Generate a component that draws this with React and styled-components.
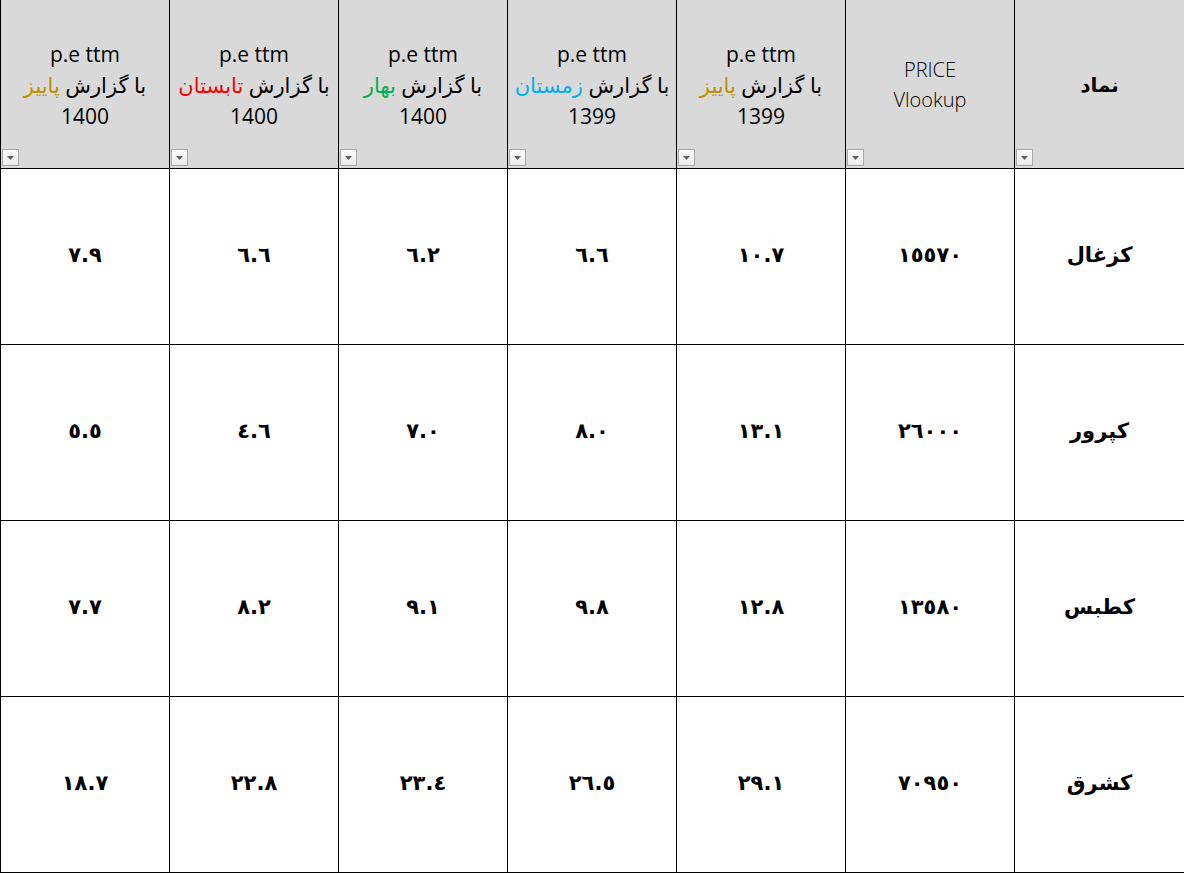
import React from 'react';
import styled, { createGlobalStyle } from 'styled-components';

const GlobalStyle = createGlobalStyle`
  body {
    margin: 0;
    background: #ffffff;
  }
`;

const Colors = {
  headerBg: '#d9d9d9',
  line: '#000000',
  autumn: '#bf8f00',
  summer: '#ff0000',
  spring: '#00b050',
  winter: '#00b0f0',
};

// columns in sheet order (right to left)
const columns = [
  { kind: 'symbol', title: 'نماد' },
  { kind: 'price', lines: ['PRICE', 'Vlookup'] },
  { kind: 'pe', season: 'پاییز', color: Colors.autumn, year: '1399' },
  { kind: 'pe', season: 'زمستان', color: Colors.winter, year: '1399' },
  { kind: 'pe', season: 'بهار', color: Colors.spring, year: '1400' },
  { kind: 'pe', season: 'تابستان', color: Colors.summer, year: '1400' },
  { kind: 'pe', season: 'پاییز', color: Colors.autumn, year: '1400' },
];

const rows = [
  ['کزغال', '١٥٥٧٠', '١٠.٧', '٦.٦', '٦.٢', '٦.٦', '٧.٩'],
  ['کپرور', '٢٦٠٠٠', '١٣.١', '٨.٠', '٧.٠', '٤.٦', '٥.٥'],
  ['کطبس', '١٣٥٨٠', '١٢.٨', '٩.٨', '٩.١', '٨.٢', '٧.٧'],
  ['کشرق', '٧٠٩٥٠', '٢٩.١', '٢٦.٥', '٢٣.٤', '٢٢.٨', '١٨.٧'],
];

const FilterButton = () => (
  <FilterBox>
    <svg width="7" height="4" viewBox="0 0 7 4">
      <path d="M0 0 L7 0 L3.5 4 Z" fill="#5f5f5f" />
    </svg>
  </FilterBox>
);

const HeaderContent = ({ col }) => {
  if (col.kind === 'symbol') {
    return <SymbolTitle>{col.title}</SymbolTitle>;
  }
  if (col.kind === 'price') {
    return (
      <TitleStack>
        {col.lines.map(l => <LightLine key={l}>{l}</LightLine>)}
      </TitleStack>
    );
  }
  return (
    <TitleStack>
      <TitleLine>p.e ttm</TitleLine>
      <TitleLine dir="rtl">
        با گزارش <Season color={col.color}>{col.season}</Season>
      </TitleLine>
      <TitleLine>{col.year}</TitleLine>
    </TitleStack>
  );
};

const App = () => (
  <>
    <GlobalStyle />
    <Sheet>
      {columns.map((col, i) => (
        <HeaderCell key={`h${i}`}>
          <HeaderContent col={col} />
          <FilterButton />
        </HeaderCell>
      ))}
      {rows.map((row, r) => row.map((value, c) => (
        <DataCell key={`${r}-${c}`} symbol={c === 0}>
          {value}
        </DataCell>
      )))}
    </Sheet>
  </>
);

const Sheet = styled.div`
  direction: rtl;
  display: grid;
  grid-template-columns: 170px repeat(6, 169px);
  grid-template-rows: 169px repeat(4, 176px);
  width: 1184px;
`;

const HeaderCell = styled.div`
  position: relative;
  box-sizing: border-box;
  display: flex;
  align-items: center;
  justify-content: center;
  background: ${Colors.headerBg};
  border-left: 1px solid ${Colors.line};
  border-bottom: 1px solid ${Colors.line};
  padding-top: 2px;
`;

const TitleStack = styled.div`
  display: flex;
  flex-direction: column;
  align-items: center;
`;

const TitleLine = styled.div`
  font-family: "Open Sans", "DejaVu Sans", sans-serif;
  font-size: 21px;
  line-height: 31px;
  color: #000;
  white-space: nowrap;
`;

const LightLine = styled(TitleLine)`
  font-weight: 300;
  font-size: 20px;
  line-height: 30px;
  color: #000;
`;

const Season = styled.span`
  color: ${p => p.color};
`;

const SymbolTitle = styled.div`
  font-family: "DejaVu Sans", sans-serif;
  font-weight: bold;
  font-size: 20px;
  color: #000;
`;

const FilterBox = styled.div`
  position: absolute;
  left: 1px;
  bottom: 2px;
  box-sizing: border-box;
  width: 17px;
  height: 17px;
  border: 1px solid #a9a9a9;
  background: linear-gradient(#fbfbfb, #ececec);
  display: flex;
  align-items: center;
  justify-content: center;
`;

const DataCell = styled.div`
  box-sizing: border-box;
  display: flex;
  align-items: center;
  justify-content: center;
  border-left: 1px solid ${Colors.line};
  border-bottom: 1px solid ${Colors.line};
  font-family: "DejaVu Sans", sans-serif;
  font-weight: bold;
  font-size: ${p => (p.symbol ? '21px' : '21px')};
  color: #000;
  padding-bottom: 4px;
`;

export default App;
